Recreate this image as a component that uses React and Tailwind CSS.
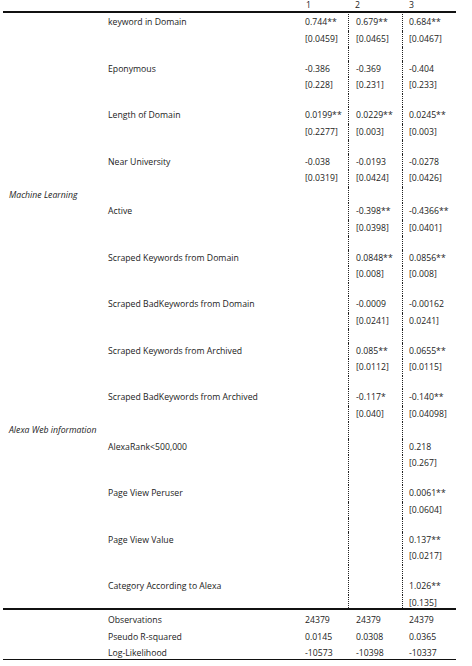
const blocks = [
    { label: 'keyword in Domain', c: ['0.744**', '0.679**', '0.684**'], s: ['[0.0459]', '[0.0465]', '[0.0467]'] },
    { label: 'Eponymous', c: ['-0.386', '-0.369', '-0.404'], s: ['[0.228]', '[0.231]', '[0.233]'] },
    { label: 'Length of Domain', c: ['0.0199**', '0.0229**', '0.0245**'], s: ['[0.2277]', '[0.003]', '[0.003]'] },
    { label: 'Near University', c: ['-0.038', '-0.0193', '-0.0278'], s: ['[0.0319]', '[0.0424]', '[0.0426]'], last: true },
    { section: 'Machine Learning' },
    { label: 'Active', c: ['', '-0.398**', '-0.4366**'], s: ['', '[0.0398]', '[0.0401]'] },
    { label: 'Scraped Keywords from Domain', c: ['', '0.0848**', '0.0856**'], s: ['', '[0.008]', '[0.008]'] },
    { label: 'Scraped BadKeywords from Domain', c: ['', '-0.0009', '-0.00162'], s: ['', '[0.0241]', '0.0241]'] },
    { label: 'Scraped Keywords from Archived', c: ['', '0.085**', '0.0655**'], s: ['', '[0.0112]', '[0.0115]'] },
    { label: 'Scraped BadKeywords from Archived', c: ['', '-0.117*', '-0.140**'], s: ['', '[0.040]', '[0.04098]'], last: true },
    { section: 'Alexa Web information' },
    { label: 'AlexaRank<500,000', c: ['', '', '0.218'], s: ['', '', '[0.267]'] },
    { label: 'Page View Peruser', c: ['', '', '0.0061**'], s: ['', '', '[0.0604]'] },
    { label: 'Page View Value', c: ['', '', '0.137**'], s: ['', '', '[0.0217]'] },
    { label: 'Category According to Alexa', c: ['', '', '1.026**'], s: ['', '', '[0.135]'], end: true },
];

const stats = [
    { label: 'Observations', v: ['24379', '24379', '24379'] },
    { label: 'Pseudo R-squared', v: ['0.0145', '0.0308', '0.0365'] },
    { label: 'Log-Likelihood', v: ['-10573', '-10398', '-10337'] },
];

// one line of the table; col 2 and 3 carry the dotted rules when `dotted` is set
function Row({ label, italic, vals = ['', '', ''], h = 'h-[16.5px]', dotted = true }) {
    return (
        <div className={`flex ${h} leading-[16.5px]`}>
            <div className="w-[298px] shrink-0 flex">
                {italic ? (
                    <span className="pl-[9px] italic">{label}</span>
                ) : (
                    <span className="pl-[108px]">{label}</span>
                )}
            </div>
            <div className="w-[50px] shrink-0 pl-[7px]">{vals[0]}</div>
            <div className={`w-[54px] shrink-0 pl-[7px] ${dotted ? 'border-l border-dotted border-[#222]' : 'border-l border-transparent'}`}>{vals[1]}</div>
            <div className={`w-[54px] shrink-0 pl-[6px] ${dotted ? 'border-l border-dotted border-[#222]' : 'border-l border-transparent'}`}>{vals[2]}</div>
        </div>
    );
}

function Spacer() {
    return (
        <div className="flex h-[13.5px]">
            <div className="w-[348px] shrink-0" />
            <div className="w-[54px] shrink-0 border-l border-dotted border-[#222]" />
            <div className="w-[54px] shrink-0 border-l border-dotted border-[#222]" />
        </div>
    );
}

export default function App() {
    return (
        <div
            className="w-[472px] h-[666px] bg-white text-[#222] text-[8.7px] overflow-hidden"
            style={{ fontFamily: '"Open Sans", Lato, sans-serif' }}
        >
            {/* column numbers */}
            <div className="flex h-[11px] leading-[11px]">
                <div className="w-[306px] shrink-0" />
                <div className="w-[49px] shrink-0">1</div>
                <div className="w-[54px] shrink-0">2</div>
                <div>3</div>
            </div>
            <div className="ml-[3px] w-[453px] h-[1.5px] bg-[#111]" />

            <div className="pt-[1.5px]">
                {blocks.map((b, i) =>
                    b.section ? (
                        <Row key={i} label={b.section} italic />
                    ) : (
                        <div key={i}>
                            <Row label={b.label} vals={b.c} />
                            <Row label="" vals={b.s} h={b.end ? 'h-[13.5px]' : 'h-[16.5px]'} />
                            {!b.last && !b.end && <Spacer />}
                        </div>
                    )
                )}
            </div>
            <div className="ml-[3px] w-[453px] h-[1.5px] bg-[#111]" />

            <div className="pt-[2.5px]">
                {stats.map((r, i) => (
                    <Row
                        key={i}
                        label={r.label}
                        vals={r.v}
                        dotted={false}
                        h={i === stats.length - 1 ? 'h-[13.5px]' : 'h-[16.5px]'}
                    />
                ))}
            </div>
            <div className="ml-[3px] w-[453px] h-[1.5px] bg-[#111]" />
        </div>
    );
}
